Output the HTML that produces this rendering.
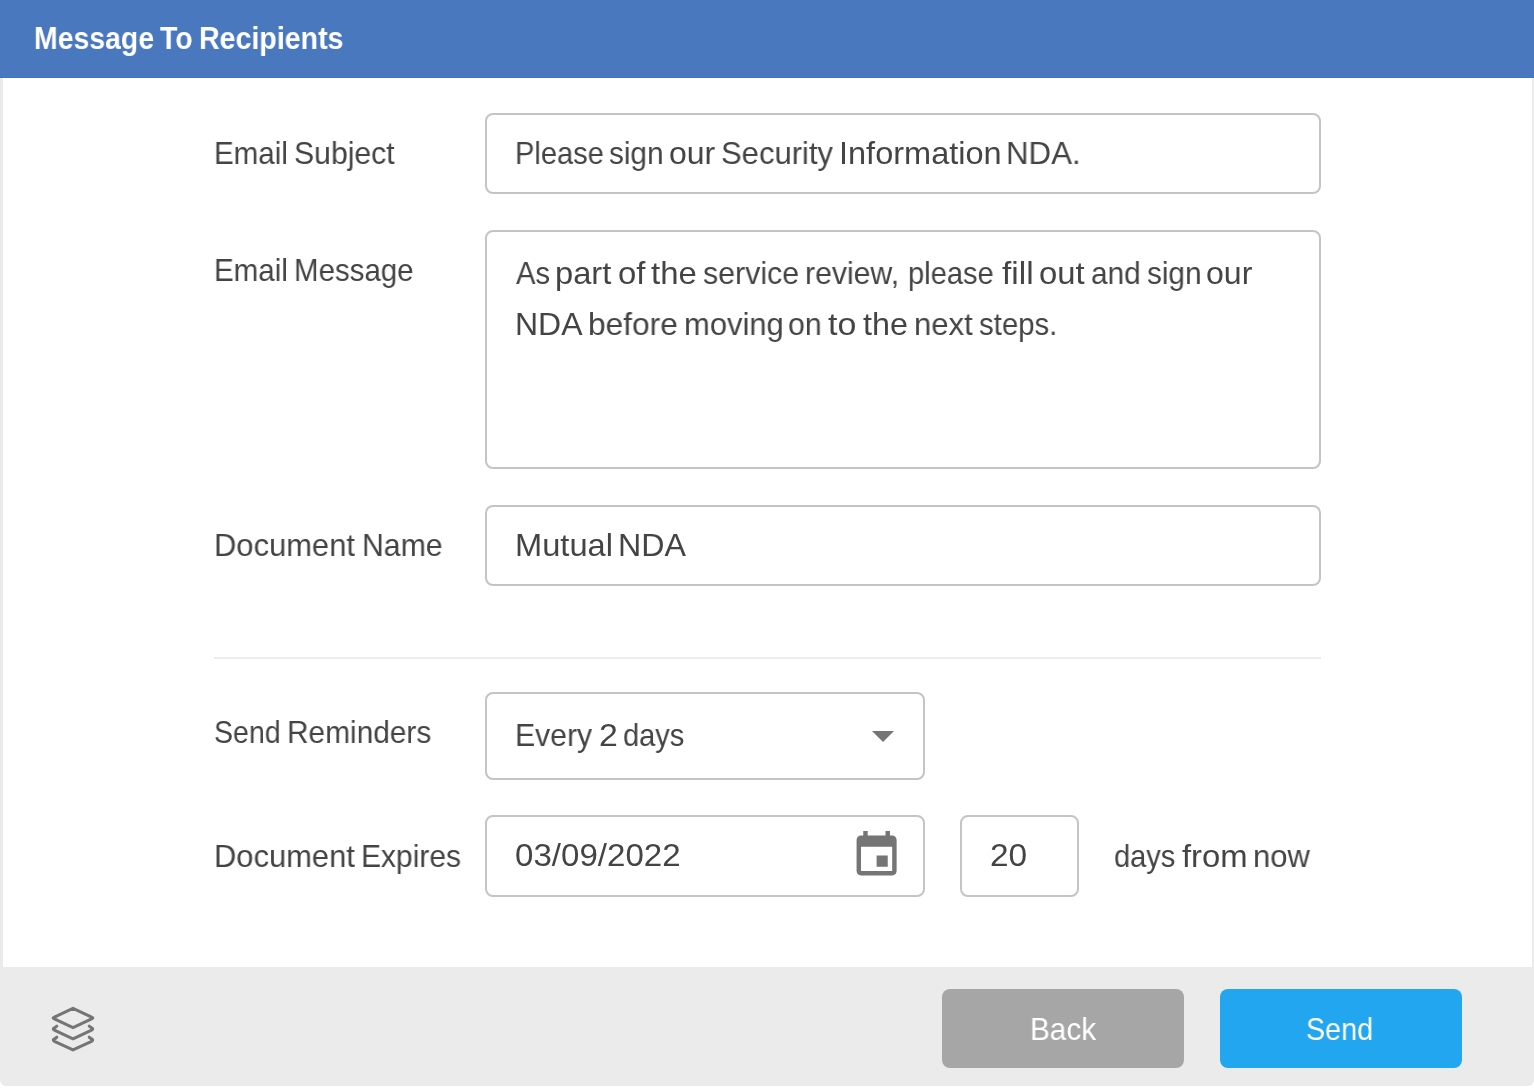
<!DOCTYPE html>
<html><head><meta charset="utf-8"><style>
html,body{margin:0;padding:0;}
body{width:1534px;height:1090px;position:relative;overflow:hidden;background:#fff;font-family:"Liberation Sans",sans-serif;}
.modal{position:absolute;left:0;top:0;width:1534px;height:1086px;background:#ebebeb;border-radius:0 0 6px 6px;overflow:hidden;}
.hdr{position:absolute;left:0;top:0;width:1534px;height:77px;background:#4a78bf;border-bottom:1px solid #4474bc;}
.content{position:absolute;left:3px;top:78px;width:1529px;height:889px;background:#fff;}
.box{position:absolute;box-sizing:border-box;border:2px solid #c4c4c4;border-radius:8px;background:#fff;}
.t{position:absolute;white-space:nowrap;line-height:32px;transform-origin:0 0;will-change:transform;}
.sep{position:absolute;left:214px;top:657px;width:1107px;height:2px;background:#ececec;}
.btn{position:absolute;top:989px;width:242px;height:79px;border-radius:8px;}
</style></head><body>
<div class="modal">
<div class="hdr"></div>
<div class="content"></div>
</div>
<div class="box" style="left:485px;top:113px;width:836px;height:81px;"></div>
<div class="box" style="left:485px;top:230px;width:836px;height:239px;"></div>
<div class="box" style="left:485px;top:505px;width:836px;height:81px;"></div>
<div class="sep"></div>
<div class="box" style="left:485px;top:692px;width:440px;height:88px;"></div>
<div class="box" style="left:485px;top:815px;width:440px;height:82px;"></div>
<div class="box" style="left:960px;top:815px;width:119px;height:82px;"></div>
<div class="btn" style="left:942px;background:#a6a6a6;"></div>
<div class="btn" style="left:1220px;background:#23a6f0;"></div>
<svg style="position:absolute;left:0;top:0" width="1534" height="1090" viewBox="0 0 1534 1090">
<polygon points="872,731 894,731 883,742" fill="#757575"/>
<g transform="translate(849.9,828.85) scale(2.225)"><path fill="#757575" d="M17 12h-5v5h5v-5zM16 1v2H8V1H6v2H5c-1.11 0-1.99.9-1.99 2L3 19c0 1.1.89 2 2 2h14c1.1 0 2-.9 2-2V5c0-1.1-.9-2-2-2h-1V1h-2zm3 18H5V8h14v11z"/></g>
<g fill="none" stroke="#757575" stroke-width="3" stroke-linecap="round" stroke-linejoin="round">
<path d="M73,1008.3 L91.6,1017.1 Q94.1,1018 91.6,1018.9 L73,1027.7 L54.4,1018.9 Q51.9,1018 54.4,1017.1 Z"/>
<path d="M56.8,1026.10 L54.9,1027.60 Q51.9,1029.00 54.4,1030.20 L73,1038.80 L91.6,1030.20 Q94.1,1029.00 91.1,1027.60 L89.2,1026.10"/>
<path d="M56.8,1037.20 L54.9,1038.70 Q51.9,1040.10 54.4,1041.30 L73,1049.90 L91.6,1041.30 Q94.1,1040.10 91.1,1038.70 L89.2,1037.20"/>
</g>
</svg>
<div class="t" style="left:33.98px;top:22.0px;font-size:32px;font-weight:700;color:#fff;transform:scaleX(0.8882);">Message</div>
<div class="t" style="left:160.3px;top:22.0px;font-size:32px;font-weight:700;color:#fff;transform:scaleX(0.8861);">To</div>
<div class="t" style="left:199.22px;top:22.0px;font-size:32px;font-weight:700;color:#fff;transform:scaleX(0.8925);">Recipients</div>
<div class="t" style="left:214.13px;top:136.7px;font-size:32px;font-weight:400;color:#444;transform:scaleX(0.9227);">Email</div>
<div class="t" style="left:294.01px;top:136.7px;font-size:32px;font-weight:400;color:#444;transform:scaleX(0.9433);">Subject</div>
<div class="t" style="left:515.37px;top:136.8px;font-size:32px;font-weight:400;color:#444;transform:scaleX(0.9086);">Please</div>
<div class="t" style="left:609.27px;top:136.8px;font-size:32px;font-weight:400;color:#444;transform:scaleX(0.9286);">sign</div>
<div class="t" style="left:669.3px;top:136.8px;font-size:32px;font-weight:400;color:#444;transform:scaleX(0.9956);">our</div>
<div class="t" style="left:721.26px;top:136.8px;font-size:32px;font-weight:400;color:#444;transform:scaleX(0.969);">Security</div>
<div class="t" style="left:838.85px;top:136.8px;font-size:32px;font-weight:400;color:#444;transform:scaleX(1.0161);">Information</div>
<div class="t" style="left:1005.87px;top:136.8px;font-size:32px;font-weight:400;color:#444;transform:scaleX(0.9775);">NDA.</div>
<div class="t" style="left:214.13px;top:253.7px;font-size:32px;font-weight:400;color:#444;transform:scaleX(0.9227);">Email</div>
<div class="t" style="left:294.04px;top:253.7px;font-size:32px;font-weight:400;color:#444;transform:scaleX(0.9208);">Message</div>
<div class="t" style="left:515.9px;top:256.7px;font-size:32px;font-weight:400;color:#444;transform:scaleX(0.9139);">As</div>
<div class="t" style="left:555.26px;top:256.7px;font-size:32px;font-weight:400;color:#444;transform:scaleX(1.0208);">part</div>
<div class="t" style="left:617.87px;top:256.7px;font-size:32px;font-weight:400;color:#444;transform:scaleX(1.0269);">of</div>
<div class="t" style="left:651.07px;top:256.7px;font-size:32px;font-weight:400;color:#444;transform:scaleX(1.0286);">the</div>
<div class="t" style="left:702.65px;top:256.7px;font-size:32px;font-weight:400;color:#444;transform:scaleX(0.9485);">service</div>
<div class="t" style="left:804.51px;top:256.7px;font-size:32px;font-weight:400;color:#444;transform:scaleX(0.9442);">review,</div>
<div class="t" style="left:907.88px;top:256.7px;font-size:32px;font-weight:400;color:#444;transform:scaleX(0.9088);">please</div>
<div class="t" style="left:1001.5px;top:256.7px;font-size:32px;font-weight:400;color:#444;transform:scaleX(1.0464);">fill</div>
<div class="t" style="left:1038.77px;top:256.7px;font-size:32px;font-weight:400;color:#444;transform:scaleX(1.0256);">out</div>
<div class="t" style="left:1091.07px;top:256.7px;font-size:32px;font-weight:400;color:#444;transform:scaleX(0.932);">and</div>
<div class="t" style="left:1146.57px;top:256.7px;font-size:32px;font-weight:400;color:#444;transform:scaleX(0.9286);">sign</div>
<div class="t" style="left:1206.1px;top:256.7px;font-size:32px;font-weight:400;color:#444;transform:scaleX(1.0022);">our</div>
<div class="t" style="left:515.11px;top:307.8px;font-size:32px;font-weight:400;color:#444;transform:scaleX(0.9953);">NDA</div>
<div class="t" style="left:588.32px;top:307.8px;font-size:32px;font-weight:400;color:#444;transform:scaleX(0.9897);">before</div>
<div class="t" style="left:683.86px;top:307.8px;font-size:32px;font-weight:400;color:#444;transform:scaleX(0.9677);">moving</div>
<div class="t" style="left:788.45px;top:307.8px;font-size:32px;font-weight:400;color:#444;transform:scaleX(0.9485);">on</div>
<div class="t" style="left:828.14px;top:307.8px;font-size:32px;font-weight:400;color:#444;transform:scaleX(1.06);">to</div>
<div class="t" style="left:862.89px;top:307.8px;font-size:32px;font-weight:400;color:#444;transform:scaleX(1.0095);">the</div>
<div class="t" style="left:913.66px;top:307.8px;font-size:32px;font-weight:400;color:#444;transform:scaleX(0.9724);">next</div>
<div class="t" style="left:978.88px;top:307.8px;font-size:32px;font-weight:400;color:#444;transform:scaleX(0.9171);">steps.</div>
<div class="t" style="left:214.0px;top:528.7px;font-size:32px;font-weight:400;color:#444;transform:scaleX(0.9664);">Document</div>
<div class="t" style="left:361.67px;top:528.7px;font-size:32px;font-weight:400;color:#444;transform:scaleX(0.9444);">Name</div>
<div class="t" style="left:515.04px;top:528.7px;font-size:32px;font-weight:400;color:#444;transform:scaleX(1.0198);">Mutual</div>
<div class="t" style="left:618.38px;top:528.7px;font-size:32px;font-weight:400;color:#444;transform:scaleX(1.0062);">NDA</div>
<div class="t" style="left:213.62px;top:715.7px;font-size:32px;font-weight:400;color:#444;transform:scaleX(0.8915);">Send</div>
<div class="t" style="left:287.3px;top:715.7px;font-size:32px;font-weight:400;color:#444;transform:scaleX(0.9325);">Reminders</div>
<div class="t" style="left:515.27px;top:718.6px;font-size:32px;font-weight:400;color:#444;transform:scaleX(0.943);">Every</div>
<div class="t" style="left:598.69px;top:718.6px;font-size:32px;font-weight:400;color:#444;transform:scaleX(1.0571);">2</div>
<div class="t" style="left:622.99px;top:718.6px;font-size:32px;font-weight:400;color:#444;transform:scaleX(0.9077);">days</div>
<div class="t" style="left:214.0px;top:839.7px;font-size:32px;font-weight:400;color:#444;transform:scaleX(0.9657);">Document</div>
<div class="t" style="left:361.49px;top:839.7px;font-size:32px;font-weight:400;color:#444;transform:scaleX(0.9369);">Expires</div>
<div class="t" style="left:515.37px;top:838.8px;font-size:32px;font-weight:400;color:#444;transform:scaleX(1.0342);">03/09/2022</div>
<div class="t" style="left:990.11px;top:838.9px;font-size:32px;font-weight:400;color:#444;transform:scaleX(1.0437);">20</div>
<div class="t" style="left:1114.19px;top:839.7px;font-size:32px;font-weight:400;color:#444;transform:scaleX(0.9077);">days</div>
<div class="t" style="left:1181.7px;top:839.7px;font-size:32px;font-weight:400;color:#444;transform:scaleX(1.0258);">from</div>
<div class="t" style="left:1252.66px;top:839.7px;font-size:32px;font-weight:400;color:#444;transform:scaleX(0.9702);">now</div>
<div class="t" style="left:1030.12px;top:1013.0px;font-size:32px;font-weight:400;color:#fff;transform:scaleX(0.9279);">Back</div>
<div class="t" style="left:1306.41px;top:1013.0px;font-size:32px;font-weight:400;color:#fff;transform:scaleX(0.8972);">Send</div>
</body></html>
